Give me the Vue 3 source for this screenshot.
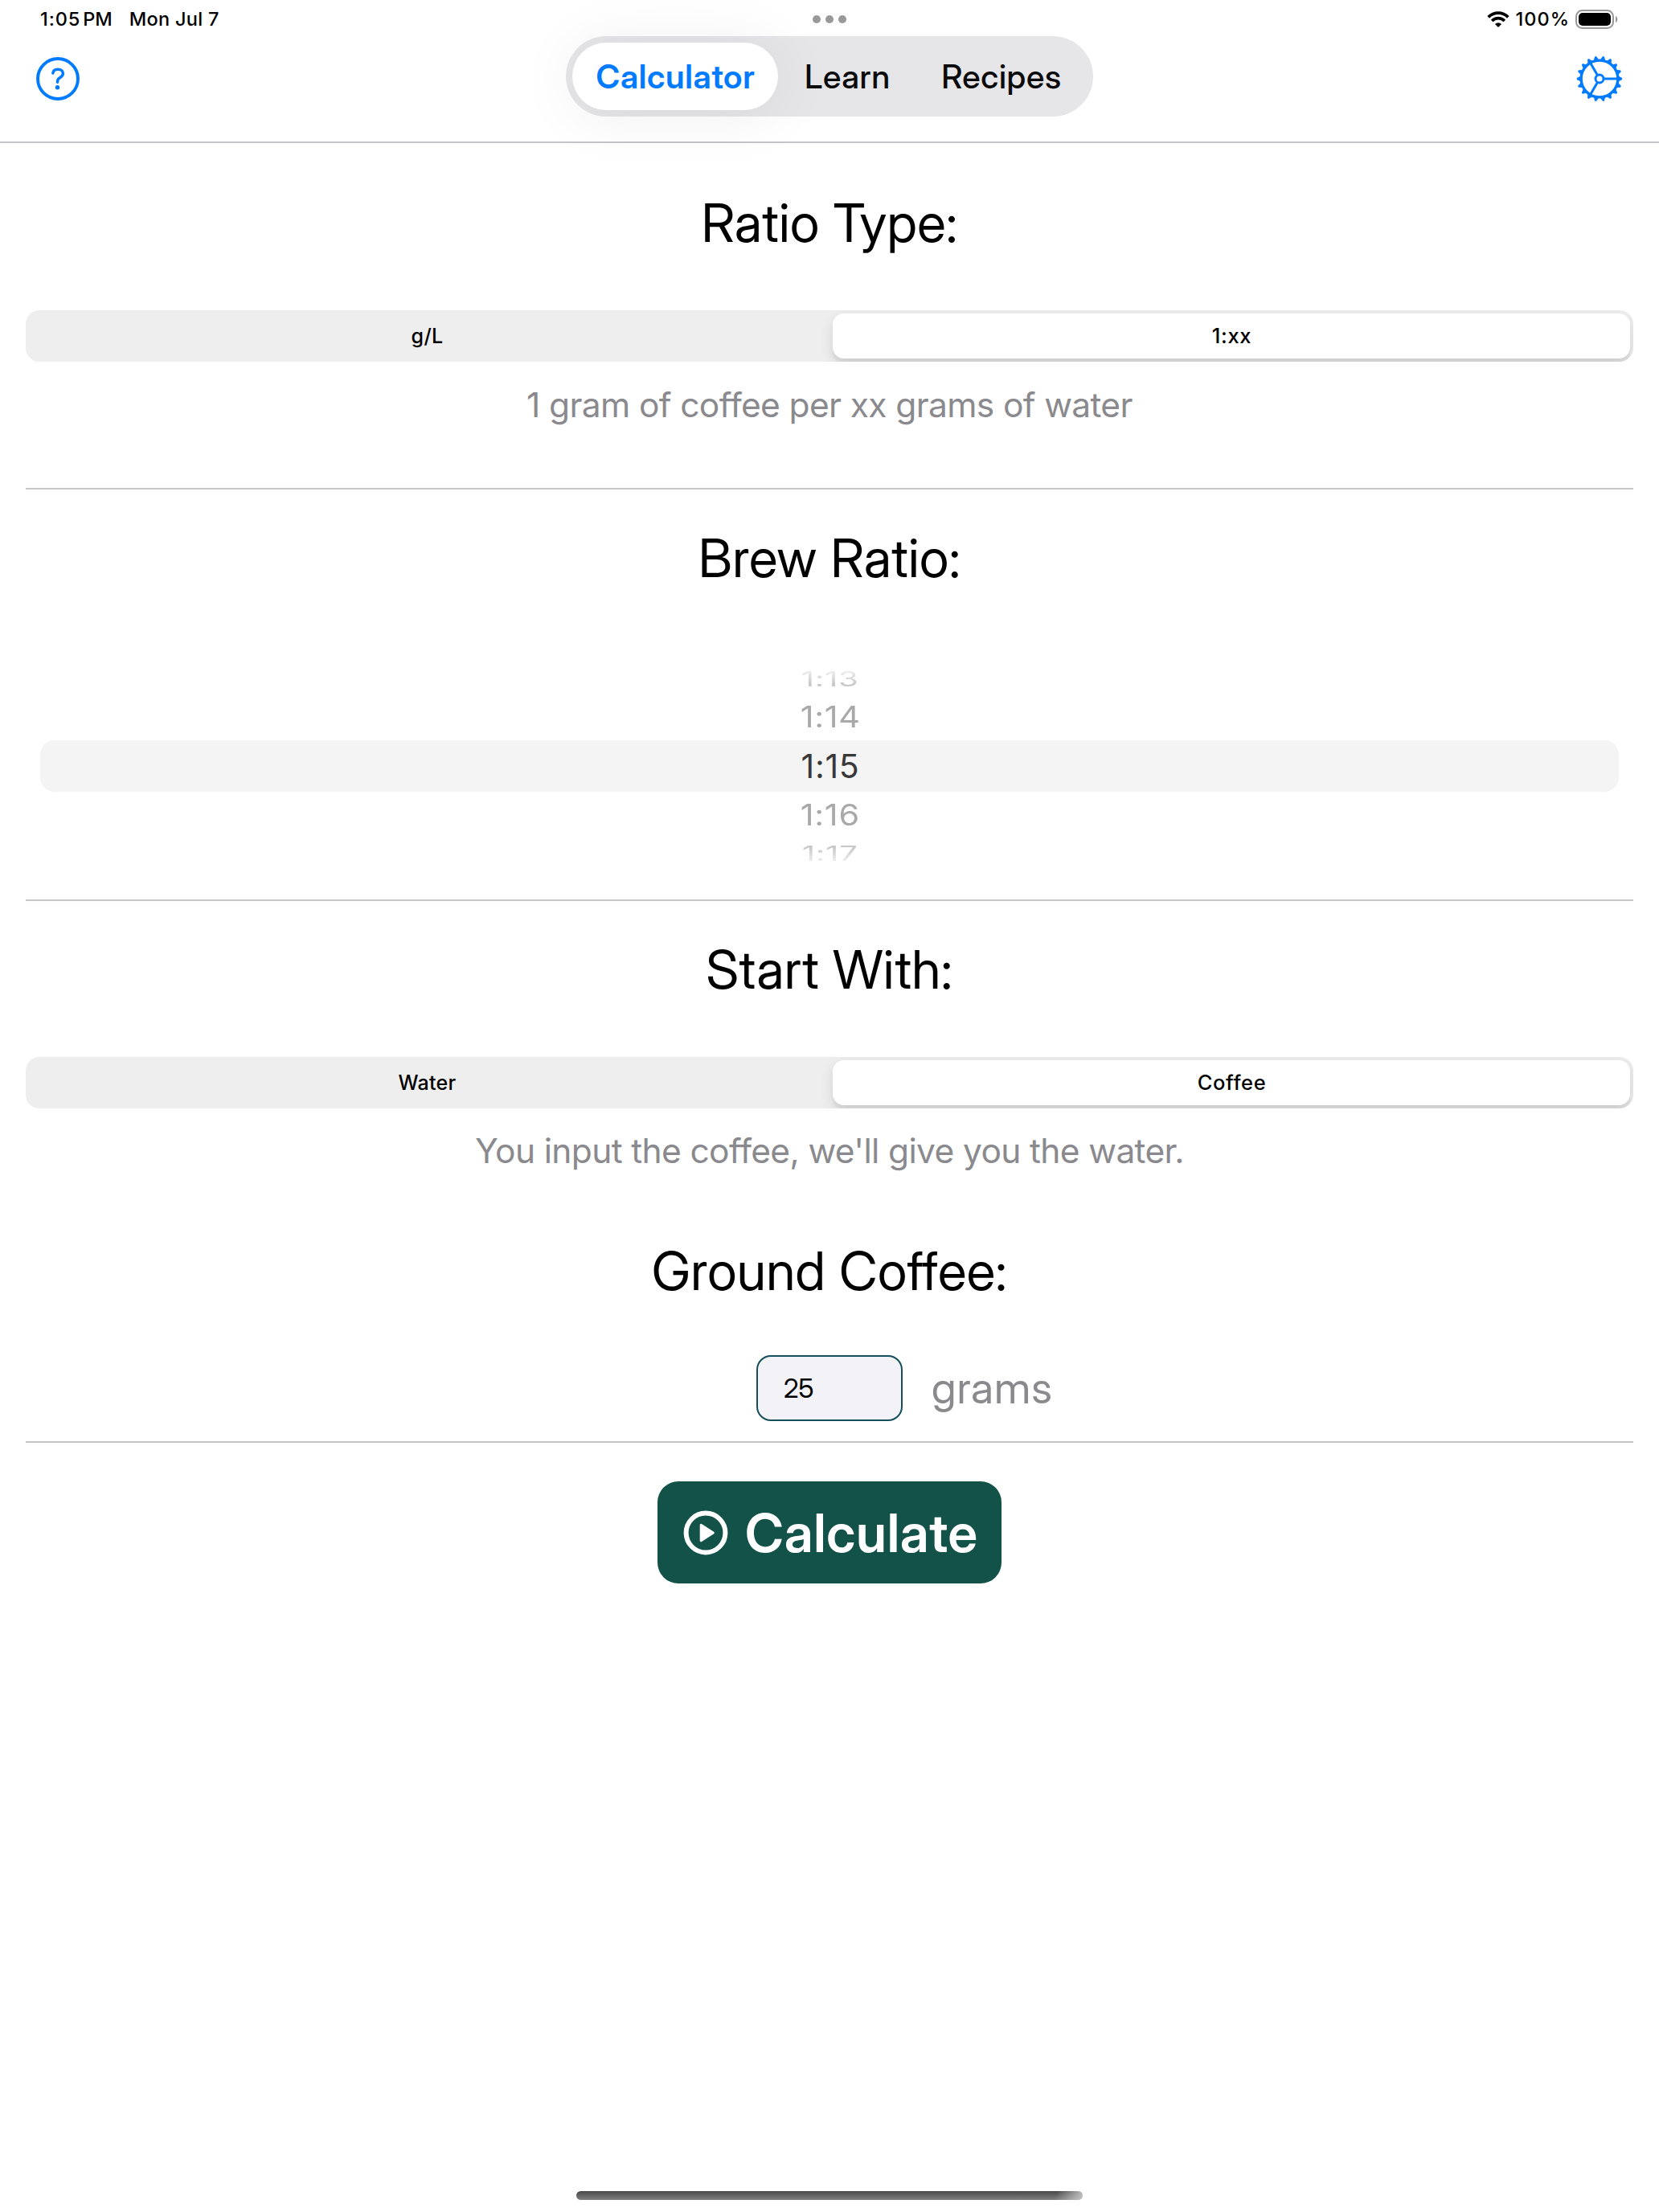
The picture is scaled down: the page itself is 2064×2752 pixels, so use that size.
<script setup>
import { ref } from 'vue'

const tabs = ['Calculator', 'Learn', 'Recipes']
const activeTab = ref('Calculator')

const ratioTypes = ['g/L', '1:xx']
const ratioType = ref('1:xx')

const startOptions = ['Water', 'Coffee']
const startWith = ref('Coffee')

const ratios = ['1:13', '1:14', '1:15', '1:16', '1:17']
const rowClasses = ['far-top', 'near-top', 'selected', 'near-bottom', 'far-bottom']

const amount = ref('25')

const teeth = Array.from({ length: 18 }, (_, i) => i * 20)
</script>

<template>
  <div class="screen">
    <header class="header">
      <div class="status">
        <div class="status-left">
          <span class="clock">1:05</span>
          <span class="meridiem">PM</span>
          <span class="date">Mon Jul 7</span>
        </div>
        <svg class="dots" width="44" height="12" viewBox="0 0 44 12" fill="#999">
          <circle cx="6" cy="6" r="5" />
          <circle cx="22" cy="6" r="5" />
          <circle cx="38" cy="6" r="5" />
        </svg>
        <div class="status-right">
          <svg class="wifi" width="28" height="20" viewBox="0 0 28 20">
            <g fill="none" stroke="#000" stroke-width="3.7">
              <path d="M1.7 7.4a17.2 17.2 0 0 1 24.6 0" />
              <path d="M6.2 12a10.9 10.9 0 0 1 15.6 0" />
            </g>
            <path d="M14 20l-4-4.1a5.8 5.8 0 0 1 8 0z" fill="#000" />
          </svg>
          <span class="percent">100%</span>
          <svg class="battery" width="54" height="24" viewBox="0 0 54 24">
            <rect x="1" y="1" width="46" height="22" rx="7.5" fill="none" stroke="#999" stroke-width="2" />
            <rect x="4" y="4" width="40" height="16" rx="5" fill="#000" />
            <path d="M50 8c3.2 1 3.2 7 0 8z" fill="#999" />
          </svg>
        </div>
      </div>

      <nav class="nav">
        <button class="icon-button" aria-label="Help">
          <svg width="60" height="60" viewBox="0 0 60 60" fill="none" stroke="#007aff">
            <circle cx="30" cy="30" r="25" stroke-width="3.9" />
            <path d="M23.8 23.1C24.2 19.9 26.7 18.2 30 18.2C33.7 18.2 36.4 20.2 36.4 23.3C36.4 25.8 35 27.2 32.8 28.6C30.6 30 29.5 31.2 29.5 33.3V34.3" stroke-width="3.5" stroke-linecap="round" stroke-linejoin="round" />
            <circle cx="29.5" cy="40.7" r="2.7" fill="#007aff" stroke="none" />
          </svg>
        </button>
        <div class="tabs">
          <button v-for="tab in tabs" :key="tab" class="tab" :class="[tab.toLowerCase(), { active: tab === activeTab }]" @click="activeTab = tab">{{ tab }}</button>
        </div>
        <button class="icon-button" aria-label="Settings">
          <svg width="60" height="60" viewBox="-30 -30 60 60" fill="none" stroke="#007aff">
            <path v-for="angle in teeth" :key="angle" :transform="`rotate(${angle})`" d="M23.5 -3.2L27.8 -1.2Q29 0 27.8 1.2L23.5 3.2z" fill="#007aff" stroke="none" />
            <circle r="22.9" stroke-width="3.4" />
            <circle r="5" stroke-width="2.9" />
            <path v-for="angle in [0, 120, 240]" :key="'s' + angle" :transform="`rotate(${angle})`" d="M6 0H22" stroke-width="3" />
          </svg>
        </button>
      </nav>
    </header>

    <main class="content">
      <section class="section">
        <h1 class="title">Ratio Type:</h1>
        <div class="segments">
          <button v-for="option in ratioTypes" :key="option" class="segment" :class="{ on: option === ratioType }" @click="ratioType = option">{{ option }}</button>
        </div>
        <p class="hint">1 gram of coffee per xx grams of water</p>
      </section>

      <section class="section brew">
        <h1 class="title">Brew Ratio:</h1>
        <div class="wheel">
          <div v-for="(ratio, i) in ratios" :key="ratio" class="row" :class="rowClasses[i]"><span>{{ ratio }}</span></div>
        </div>
      </section>

      <section class="section start">
        <h1 class="title">Start With:</h1>
        <div class="segments">
          <button v-for="option in startOptions" :key="option" class="segment" :class="{ on: option === startWith }" @click="startWith = option">{{ option }}</button>
        </div>
        <p class="hint">You input the coffee, we'll give you the water.</p>
        <h1 class="title ground">Ground Coffee:</h1>
        <div class="amount">
          <input v-model="amount" class="field" inputmode="decimal" aria-label="Ground coffee">
          <span class="unit">grams</span>
        </div>
      </section>

      <button class="calculate">
        <svg width="56" height="60" viewBox="0 0 56 60">
          <circle cx="28" cy="30" r="24.4" fill="none" stroke="#fff" stroke-width="6" />
          <path d="M22.2 20.3V39.7L37.3 30z" fill="#fff" stroke="#fff" stroke-width="3" stroke-linejoin="round" />
        </svg>
        <span>Calculate</span>
      </button>
    </main>

    <div class="home-bar"></div>
  </div>
</template>

<style>
body {
  margin: 0;
  background: #fff;
}
</style>

<style scoped>
.screen {
  display: flex;
  flex-direction: column;
  width: 2064px;
  height: 2752px;
  overflow: hidden;
  background: #fff;
  color: #000;
  font-family: Inter, 'Liberation Sans', sans-serif;
}

button {
  padding: 0;
  border: 0;
  background: none;
  color: inherit;
  font: inherit;
}

svg {
  display: block;
}

.header {
  height: 176px;
  border-bottom: 2px solid #c6c6c8;
}

.status {
  display: grid;
  grid-template-columns: 1fr 44px 1fr;
  align-items: center;
  height: 45px;
  padding: 2px 50px 0;
  box-sizing: border-box;
  font-size: 23.5px;
  font-weight: 500;
  line-height: 28px;
}

.status-left,
.status-right {
  display: flex;
  align-items: center;
}

.status-right {
  justify-content: flex-end;
}

.clock {
  letter-spacing: 0.9px;
}

.meridiem {
  margin-left: 3px;
}

.date {
  margin-left: 21px;
  letter-spacing: 0.3px;
}

.percent {
  margin: 0 7px 0 8px;
  letter-spacing: 1px;
}

.nav {
  display: flex;
  justify-content: space-between;
  padding: 0 44px 0 42px;
}

.icon-button {
  height: 60px;
  margin-top: 23px;
}

.tabs {
  display: flex;
  width: 656px;
  height: 100px;
  margin-left: 2px;
  padding: 8px;
  box-sizing: border-box;
  border-radius: 50px;
  background: #e6e6e9;
}

.tab {
  width: 172px;
  height: 84px;
  border-radius: 42px;
  color: #0b0b0b;
  font-family: 'Inter Display', Inter, sans-serif;
  font-size: 41px;
  font-weight: 500;
  letter-spacing: 0.7px;
  text-indent: 1px;
}

.tab.calculator {
  width: 256px;
}

.tab.recipes {
  width: 211px;
}

.tab.active {
  background: #fff;
  box-shadow: 0 4px 80px rgba(0, 0, 0, 0.07);
  color: #007aff;
  font-weight: 600;
}

.content {
  display: flex;
  flex: 1;
  flex-direction: column;
  align-items: center;
}

.section {
  width: 2000px;
  box-sizing: border-box;
  border-bottom: 2px solid #c6c6c8;
  padding-top: 45px;
}

.section:first-child {
  padding: 59px 0 77px;
}

.title {
  margin: 0;
  font-family: 'Inter Display', Inter, sans-serif;
  font-size: 66px;
  font-weight: 400;
  letter-spacing: 0.3px;
  line-height: 80px;
  text-align: center;
}

.segments {
  display: grid;
  grid-template-columns: 990px 992px;
  column-gap: 10px;
  height: 64px;
  margin-top: 69px;
  padding: 4px;
  box-sizing: border-box;
  border-radius: 17px;
  background: #eee;
  overflow: hidden;
}

.segment {
  border-radius: 14px;
  font-size: 25px;
  font-weight: 500;
  letter-spacing: 0.3px;
  line-height: 56px;
  text-indent: 1px;
}

.segment.on {
  background: #fff;
  box-shadow: 0 6px 16px rgba(0, 0, 0, 0.12), 0 6px 2px rgba(0, 0, 0, 0.04);
  font-size: 25.5px;
  letter-spacing: 0.65px;
}

.hint {
  margin: 28px 0 0;
  color: #8a8a8e;
  font-size: 42.5px;
  letter-spacing: -0.64px;
  line-height: 52px;
  text-align: center;
}

.wheel {
  padding: 90px 18px 37px;
}

.row {
  display: flex;
  align-items: center;
  justify-content: center;
  color: #a9a9a9;
  font-size: 41px;
  letter-spacing: 0.7px;
  line-height: 50px;
  text-indent: 2px;
}

.far-top {
  height: 41px;
}

.near-top {
  height: 54px;
  margin-bottom: 2px;
}

.selected {
  height: 64px;
  border-radius: 18px;
  background: #f4f4f4;
  color: #383838;
}

.near-bottom {
  height: 57px;
}

.far-bottom {
  height: 40px;
}

.near-top span,
.near-bottom span {
  transform: scale(1.01, 0.89);
}

.far-top span,
.far-bottom span {
  color: #c8c8c8;
  transform: scale(0.98, 0.62);
}

.far-top span {
  mask-image: linear-gradient(to top, #000 30%, rgba(0, 0, 0, 0.35) 80%);
}

.far-bottom span {
  mask-image: linear-gradient(to bottom, #000 25%, rgba(0, 0, 0, 0.35) 80%);
}

.start {
  padding-bottom: 25px;
}

.start .hint {
  margin-top: 27px;
}

.ground {
  margin-top: 83px;
}

.amount {
  display: grid;
  grid-template-columns: 1fr 182px 1fr;
  align-items: center;
  height: 82px;
  margin-top: 65px;
}

.field {
  grid-column: 2;
  width: 182px;
  height: 82px;
  padding: 0 32px;
  box-sizing: border-box;
  border: 2px solid #154f5b;
  border-radius: 18px;
  outline: 0;
  background: #f2f2f7;
  color: #000;
  font-family: 'Inter Display', Inter, sans-serif;
  font-size: 33px;
}

.unit {
  margin-left: 36px;
  color: #8a8a8e;
  font-family: 'Inter Display', Inter, sans-serif;
  font-size: 54px;
  letter-spacing: 0.95px;
  line-height: 80px;
}

.calculate {
  display: flex;
  align-items: center;
  justify-content: center;
  width: 428px;
  height: 127px;
  margin-top: 48px;
  padding-left: 3px;
  box-sizing: border-box;
  border-radius: 26px;
  background: #125248;
  color: #fff;
  font-family: 'Inter Display', Inter, sans-serif;
  font-size: 66px;
  font-weight: 600;
  letter-spacing: 0.79px;
  line-height: 80px;
}

.calculate span {
  margin-left: 21px;
}

.home-bar {
  flex: none;
  align-self: center;
  width: 630px;
  height: 11px;
  margin-bottom: 15px;
  border-radius: 6px;
  background:
    linear-gradient(105deg, transparent 94.5%, rgba(200, 200, 200, 0.85) 99.5%),
    linear-gradient(#474747, #808080);
}
</style>
